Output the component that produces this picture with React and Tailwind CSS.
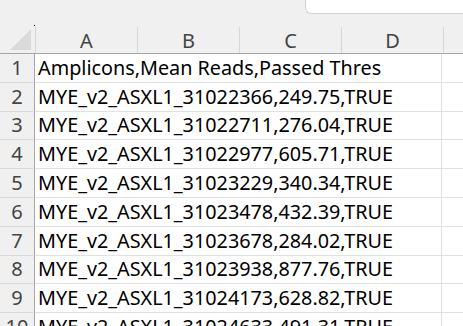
const cols = ['A', 'B', 'C', 'D']

const rows = [
  'Amplicons,Mean Reads,Passed Thres',
  'MYE_v2_ASXL1_31022366,249.75,TRUE',
  'MYE_v2_ASXL1_31022711,276.04,TRUE',
  'MYE_v2_ASXL1_31022977,605.71,TRUE',
  'MYE_v2_ASXL1_31023229,340.34,TRUE',
  'MYE_v2_ASXL1_31023478,432.39,TRUE',
  'MYE_v2_ASXL1_31023678,284.02,TRUE',
  'MYE_v2_ASXL1_31023938,877.76,TRUE',
  'MYE_v2_ASXL1_31024173,628.82,TRUE',
  'MYE_v2_ASXL1_31024633,491.31,TRUE',
]

export default function App() {
  return (
    <div className="h-[326px] w-[463px] overflow-hidden bg-white text-[19.8px] font-['Noto_Sans',sans-serif]">

      {/* top strip with name box edge */}
      <div className="relative h-[27px] flex justify-end bg-[#f0f0f0]">
        <div className="w-[158px] h-[14px] bg-white border-l border-b border-[#d1d1d1] rounded-bl-[6px]"/>
        <div className="absolute left-[34px] top-[25px] w-px h-px bg-black"/>
      </div>

      {/* column headers */}
      <div className="flex h-[27px] bg-[#f0f0f0] border-b border-[#a6a6a6] text-[#444] text-[20px]">
        <div className="w-[35px] shrink-0 flex items-end justify-end pb-[2px] pr-[3px]">
          <svg width="22" height="22" viewBox="0 0 22 22">
            <path d="M21 0 L21 21 L0 21 Z" fill="#dadada"/>
          </svg>
        </div>
        {cols.map(c => (
          <div key={c} className="w-[102px] shrink-0 border-l border-[#d6d6d6] flex items-center justify-center leading-none pt-[2px]">
            {c}
          </div>
        ))}
        <div className="flex-1 border-l border-[#d6d6d6]"/>
      </div>

      {/* data rows */}
      {rows.map((r, i) => (
        <div key={i} className="flex h-[28.8px]">
          <div className="w-[35px] shrink-0 bg-[#f0f0f0] border-r border-[#a6a6a6] border-b border-b-[#d9d9d9] flex items-end justify-center pb-[1px] leading-[26px] text-[#444] text-[20px]">
            {i + 1}
          </div>
          <div className="w-[407px] shrink-0 border-r border-b border-[#e1e1e1] flex items-end pl-[3px] pb-[1px] leading-[26px] text-black whitespace-nowrap">
            {r}
          </div>
          <div className="flex-1 border-b border-[#e1e1e1]"/>
        </div>
      ))}
    </div>
  )
}
